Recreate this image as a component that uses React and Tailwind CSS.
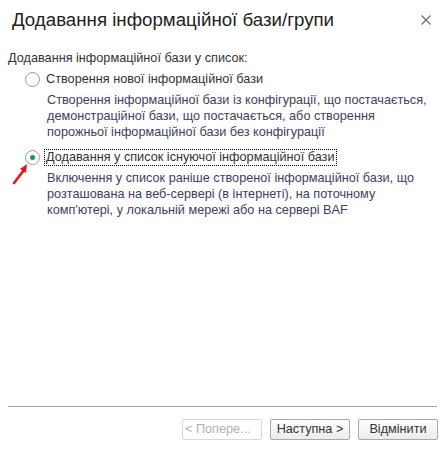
import { useState } from 'react'

function Radio({ checked }) {
  return (
    <span className="mt-[1px] flex h-[15px] w-[15px] shrink-0 items-center justify-center rounded-full border border-[#9c9c9c] bg-white">
      {checked && <span className="h-[5px] w-[5px] rounded-full bg-[#1a9a4a]" />}
    </span>
  )
}

function Option({ checked, title, desc, onSelect }) {
  return (
    <div className="flex flex-col">
      <div className="flex items-center gap-[5px] cursor-default" onClick={onSelect}>
        <Radio checked={checked} />
        <span
          className={
            'px-[1px] leading-[15px] ' +
            (checked ? 'outline outline-1 outline-dotted outline-[#000] -outline-offset-0' : '')
          }
        >
          {title}
        </span>
      </div>
      <p className="mt-[5px] pl-[22px] leading-[16px] text-[#3e3e5c]">{desc}</p>
    </div>
  )
}

export default function App() {
  const [mode, setMode] = useState('add')

  return (
    <div
      className="flex h-[454px] w-[445px] flex-col bg-white text-[12.7px] text-[#333]"
      style={{ fontFamily: '"Liberation Sans", Arial, sans-serif' }}
    >
      <div className="flex h-[40px] items-center justify-between pl-[12px] pr-[14px]">
        <h1 className="text-[18.7px] leading-none text-[#222]">Додавання інформаційної бази/групи</h1>
        <button className="text-[#777]">
          <svg width="10" height="10" viewBox="0 0 10 10">
            <path d="M0.5 0.5L9.5 9.5M9.5 0.5L0.5 9.5" stroke="#666" strokeWidth="1.1" />
          </svg>
        </button>
      </div>

      <div className="flex flex-col px-[8px] pt-[10px]">
        <div className="leading-[16px]">Додавання інформаційної бази у список:</div>

        <div className="mt-[5px] flex flex-col gap-[9px] pl-[17px]">
          <Option
            checked={mode === 'new'}
            onSelect={() => setMode('new')}
            title="Створення нової інформаційної бази"
            desc="Створення інформаційної бази із конфігурації, що постачається, демонстраційної бази, що постачається, або створення порожньої інформаційної бази без конфігурації"
          />
          <div className="relative">
            <Option
              checked={mode === 'add'}
              onSelect={() => setMode('add')}
              title="Додавання у список існуючої інформаційної бази"
              desc="Включення у список раніше створеної інформаційної бази, що розташована на веб-сервері (в інтернеті), на поточному комп'ютері, у локальній мережі або на сервері BAF"
            />
            <svg className="absolute left-[-13px] top-[12px]" width="20" height="24" viewBox="0 0 20 24">
              <path d="M2 22 L12 9" stroke="#e8141b" strokeWidth="2.6" strokeLinecap="round" />
              <path d="M15 3 L8 8 L14 12 Z" fill="#e8141b" />
            </svg>
          </div>
        </div>
      </div>

      <div className="flex-1" />

      <div className="mx-[8px] h-px bg-[#a0a0a0]" />

      <div className="flex justify-end gap-[8px] px-[7px] pb-[14px] pt-[12px]">
        <button
          disabled
          className="h-[21px] w-[80px] rounded-[2px] border border-[#d8d8d8] bg-white text-left pl-[2px] text-[#b0b0b0]"
        >
          &lt; Попере...
        </button>
        <button className="h-[21px] w-[80px] rounded-[2px] border border-[#a9a9a9] bg-gradient-to-b from-white to-[#ececec] text-[#333]">
          Наступна &gt;
        </button>
        <button className="h-[21px] w-[80px] rounded-[2px] border border-[#a9a9a9] bg-gradient-to-b from-white to-[#ececec] text-[#333]">
          Відмінити
        </button>
      </div>
    </div>
  )
}
